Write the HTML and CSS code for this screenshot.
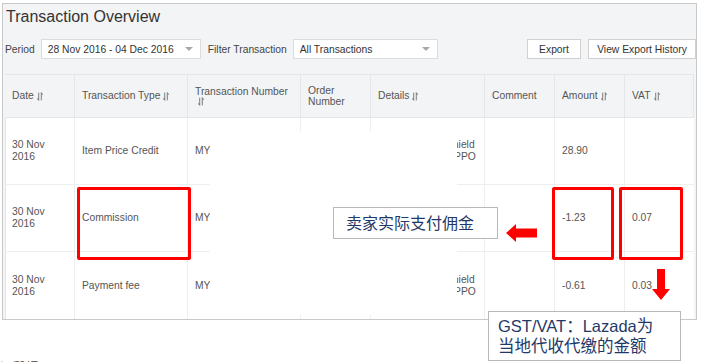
FILE: index.html
```html
<!DOCTYPE html>
<html lang="en">
<head>
<meta charset="utf-8">
<title>Transaction Overview</title>
<link rel="stylesheet" href="styles.css">
</head>
<body>
<div class="page">
  <section class="panel">
    <h1 class="title">Transaction Overview</h1>
    <div class="toolbar">
      <span class="label">Period</span>
      <div class="select select-period">28 Nov 2016 - 04 Dec 2016<span class="caret"></span></div>
      <span class="label label-filter">Filter Transaction</span>
      <div class="select select-filter">All Transactions<span class="caret"></span></div>
      <div class="actions">
        <button class="btn btn-export">Export</button>
        <button class="btn btn-history">View Export History</button>
      </div>
    </div>
    <div class="table">
      <div class="row head">
        <div class="cell">Date<svg class="sort" viewBox="0 0 7 10"><path d="M2 0.5V9.5L0.2 7M5 9.5V0.5L6.8 3"/></svg></div>
        <div class="cell">Transaction Type<svg class="sort" viewBox="0 0 7 10"><path d="M2 0.5V9.5L0.2 7M5 9.5V0.5L6.8 3"/></svg></div>
        <div class="cell">Transaction Number <svg class="sort" viewBox="0 0 7 10"><path d="M2 0.5V9.5L0.2 7M5 9.5V0.5L6.8 3"/></svg></div>
        <div class="cell">Order Number</div>
        <div class="cell">Details<svg class="sort" viewBox="0 0 7 10"><path d="M2 0.5V9.5L0.2 7M5 9.5V0.5L6.8 3"/></svg></div>
        <div class="cell">Comment</div>
        <div class="cell">Amount<svg class="sort" viewBox="0 0 7 10"><path d="M2 0.5V9.5L0.2 7M5 9.5V0.5L6.8 3"/></svg></div>
        <div class="cell">VAT<svg class="sort" viewBox="0 0 7 10"><path d="M2 0.5V9.5L0.2 7M5 9.5V0.5L6.8 3"/></svg></div>
      </div>
      <div class="row body">
        <div class="cell">30 Nov 2016</div>
        <div class="cell">Item Price Credit</div>
        <div class="cell">MY</div>
        <div class="cell"></div>
        <div class="cell details">Shield<br>OPPO</div>
        <div class="cell"></div>
        <div class="cell">28.90</div>
        <div class="cell"></div>
      </div>
      <div class="row body">
        <div class="cell">30 Nov 2016</div>
        <div class="cell">Commission</div>
        <div class="cell">MY</div>
        <div class="cell"></div>
        <div class="cell details"></div>
        <div class="cell"></div>
        <div class="cell">-1.23</div>
        <div class="cell">0.07</div>
      </div>
      <div class="row body last">
        <div class="cell">30 Nov 2016</div>
        <div class="cell">Payment fee</div>
        <div class="cell">MY</div>
        <div class="cell"></div>
        <div class="cell details">Shield<br>OPPO</div>
        <div class="cell"></div>
        <div class="cell">-0.61</div>
        <div class="cell">0.03</div>
      </div>
    </div>
  </section>
  <p class="note">温馨提示</p>

  <div class="mask"></div>
  <div class="hl hl-type"></div>
  <div class="hl hl-amount"></div>
  <div class="hl hl-vat"></div>
  <div class="callout callout-commission">卖家实际支付佣金</div>
  <svg class="arrow arrow-left" viewBox="0 0 31 18"><polygon points="0,9 10,0 10,4.5 31,4.5 31,13.5 10,13.5 10,18"/></svg>
  <svg class="arrow arrow-down" viewBox="0 0 18 31"><polygon points="5,0 13,0 13,20 18,20 9,31 0,20 5,20"/></svg>
  <div class="callout callout-vat">GST/VAT：Lazada为<br>当地代收代缴的金额</div>
</div>
</body>
</html>
```
FILE: styles.css
```css
html, body {
  margin: 0;
  padding: 0;
  height: 362px;
  overflow: hidden;
  background: #fff;
}

.page {
  position: relative;
  font-family: "Liberation Sans", Arial, "Noto Sans CJK SC", sans-serif;
  font-size: 10.3px;
  color: #555;
}

.panel {
  margin: 3px 0 0 2px;
  width: 693px;
  border: 1px solid #c9c9c9;
  background: #f3f4f6;
}

.title {
  margin: 3px 0 0 3px;
  font-size: 16px;
  line-height: 20px;
  font-weight: normal;
  color: #333;
}

.toolbar {
  display: flex;
  align-items: center;
  height: 20px;
  margin-top: 12px;
  padding-left: 2px;
}

.label {
  color: #444;
}

.label-filter {
  margin-left: 7px;
}

.select {
  position: relative;
  box-sizing: border-box;
  height: 20px;
  line-height: 19px;
  margin-left: 6px;
  padding-left: 6px;
  background: #fff;
  border: 1px solid #dcdcdc;
  color: #333;
}

.select-period {
  width: 160px;
}

.select-filter {
  width: 145px;
}

.caret {
  position: absolute;
  right: 7px;
  top: 7px;
  width: 0;
  height: 0;
  border-left: 4px solid transparent;
  border-right: 4px solid transparent;
  border-top: 4px solid #a8a8a8;
}

.actions {
  display: flex;
  gap: 7px;
  margin-left: auto;
}

.btn {
  box-sizing: border-box;
  height: 20px;
  padding: 0;
  background: #fff;
  border: 1px solid #d0d0d0;
  font-family: inherit;
  font-size: 10.3px;
  color: #333;
}

.btn-export {
  width: 54px;
}

.btn-history {
  width: 108px;
}

.table {
  margin: 15px 0 0 2px;
  width: 689px;
  box-shadow: inset 1px 0 0 #e4e6e9;
}

.row {
  display: grid;
  grid-template-columns: 70px 113px 113px 70px 114px 70px 70px 69px;
  box-sizing: border-box;
}

.head {
  height: 44px;
  border-top: 1px solid #e4e6e9;
  border-bottom: 1px solid #e4e6e9;
  background: #f3f4f6;
  line-height: 11.5px;
}

.body {
  height: 67px;
  border-bottom: 1px solid #eceef0;
  background-color: #fff;
  line-height: 12px;
  background-image: linear-gradient(#eceef0, #eceef0), linear-gradient(#eceef0, #eceef0), linear-gradient(#eceef0, #eceef0), linear-gradient(#eceef0, #eceef0), linear-gradient(#eceef0, #eceef0), linear-gradient(#eceef0, #eceef0), linear-gradient(#eceef0, #eceef0), linear-gradient(#e4e6e9, #e4e6e9);
  background-size: 1px 100%;
  background-repeat: no-repeat;
  background-position: 69px 0, 182px 0, 295px 0, 365px 0, 479px 0, 549px 0, 619px 0, 0 0;
}

.body.last {
  border-bottom: none;
}

.cell {
  display: flex;
  align-items: center;
  flex-wrap: wrap;
  align-content: center;
  box-sizing: border-box;
  padding: 0 7px;
  border-right: 1px solid #e4e6e9;
}

.body .cell {
  display: block;
  align-self: center;
  border-right: none;
}

.cell.details {
  padding-left: 75px;
  padding-right: 0;
}

.sort {
  width: 6px;
  height: 9px;
  margin-left: 3px;
  fill: none;
  stroke: #666;
  stroke-width: 1;
}

.note {
  margin: 39px 0 0 0;
  font-family: "Noto Sans CJK SC", sans-serif;
  font-size: 13px;
  line-height: 16px;
  color: #444;
}

.mask {
  position: absolute;
  left: 210px;
  top: 128px;
  width: 247px;
  height: 184px;
  background: #fff;
}

.hl {
  position: absolute;
  top: 184px;
  height: 73px;
  box-sizing: border-box;
  border: 3px solid #ff0000;
  border-radius: 2px;
}

.hl-type {
  left: 77px;
  width: 114px;
}

.hl-amount {
  left: 552px;
  width: 62px;
}

.hl-vat {
  left: 619px;
  width: 64px;
}

.callout {
  position: absolute;
  box-sizing: border-box;
  background: #fff;
  border: 1px solid #b9b9b9;
  color: #1f3a68;
}

.callout-commission {
  left: 333px;
  top: 204px;
  width: 165px;
  height: 32px;
  padding-left: 12px;
  font-family: "Noto Sans CJK SC", sans-serif;
  font-size: 16px;
  line-height: 29px;
}

.callout-vat {
  left: 488px;
  top: 308px;
  width: 193px;
  height: 50px;
  padding: 5px 0 0 9px;
  font-family: "Liberation Sans", "Noto Sans CJK SC", sans-serif;
  font-size: 16.5px;
  line-height: 19.5px;
}

.arrow {
  position: absolute;
  fill: #ff0000;
}

.arrow-left {
  left: 506px;
  top: 221px;
  width: 31px;
  height: 18px;
}

.arrow-down {
  left: 652px;
  top: 266px;
  width: 18px;
  height: 31px;
}
```
